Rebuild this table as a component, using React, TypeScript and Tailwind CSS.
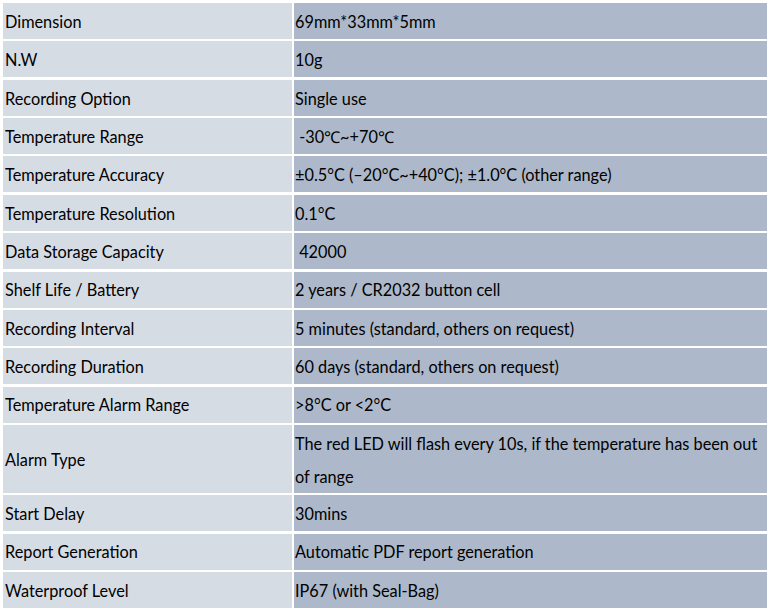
import React from "react";

const rows: [string, string, boolean?][] = [
  ["Dimension", "69mm*33mm*5mm"],
  ["N.W", "10g"],
  ["Recording Option", "Single use"],
  ["Temperature Range", "\u00a0-30℃~+70℃"],
  ["Temperature Accuracy", "±0.5°C (–20°C~+40°C); ±1.0°C (other range)"],
  ["Temperature Resolution", "0.1°C"],
  ["Data Storage Capacity", "\u00a042000"],
  ["Shelf Life / Battery", "2 years / CR2032 button cell"],
  ["Recording Interval", "5 minutes (standard, others on request)"],
  ["Recording Duration", "60 days (standard, others on request)"],
  ["Temperature Alarm Range", ">8°C or <2°C"],
  ["Alarm Type", "The red LED will flash every 10s, if the temperature has been out of range", true],
  ["Start Delay", "30mins"],
  ["Report Generation", "Automatic PDF report generation"],
  ["Waterproof Level", "IP67 (with Seal-Bag)"],
];

export default function App() {
  return (
    <div
      className="w-[771px] h-[613px] bg-white pt-[3px] pl-[3px] text-[16.3px] text-black"
      style={{ fontFamily: "Lato, 'Open Sans', sans-serif" }}
    >
      <div className="flex flex-col gap-[2.36px] w-[764px]">
        {rows.map(([k, v, tall]) => (
          <div key={k} className={`flex gap-[2px] ${tall ? "h-[68px]" : "h-[36px]"}`}>
            <div className="w-[289px] bg-[#d6dce4] flex items-center pl-[2px] pt-[2px]">{k}</div>
            <div className={`flex-1 bg-[#adb9ca] flex items-center pl-[1px] pr-[4px] pt-[2px] ${tall ? "leading-[33px]" : ""}`}>
              {v}
            </div>
          </div>
        ))}
      </div>
    </div>
  );
}
